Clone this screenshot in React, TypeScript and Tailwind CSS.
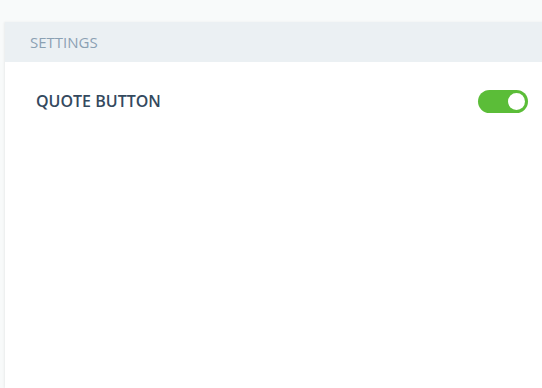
export default function App() {
  return (
    <div className="h-[388px] w-[542px] overflow-hidden bg-[#f8fafa] pl-[5px] pt-[22px] font-['Open_Sans',sans-serif]">
      <div className="h-full w-[560px] bg-white shadow-[-1px_0_2px_rgba(0,0,0,0.06)]">
        <div className="flex h-10 items-center bg-[#ebf0f3] pl-[25px] text-[15px] text-[#8ba1b3]">
          SETTINGS
        </div>
        <div className="flex items-center justify-between pl-[31px] pr-[37px] pt-[27px]">
          <span className="text-[16px] leading-6 font-semibold text-[#34495e]">QUOTE BUTTON</span>
          <button className="relative flex h-[23px] w-[50px] items-center rounded-full bg-[#5bbd38]">
            <span className="absolute right-[3px] h-[17px] w-[17px] rounded-full bg-white" />
          </button>
        </div>
      </div>
    </div>
  );
}
